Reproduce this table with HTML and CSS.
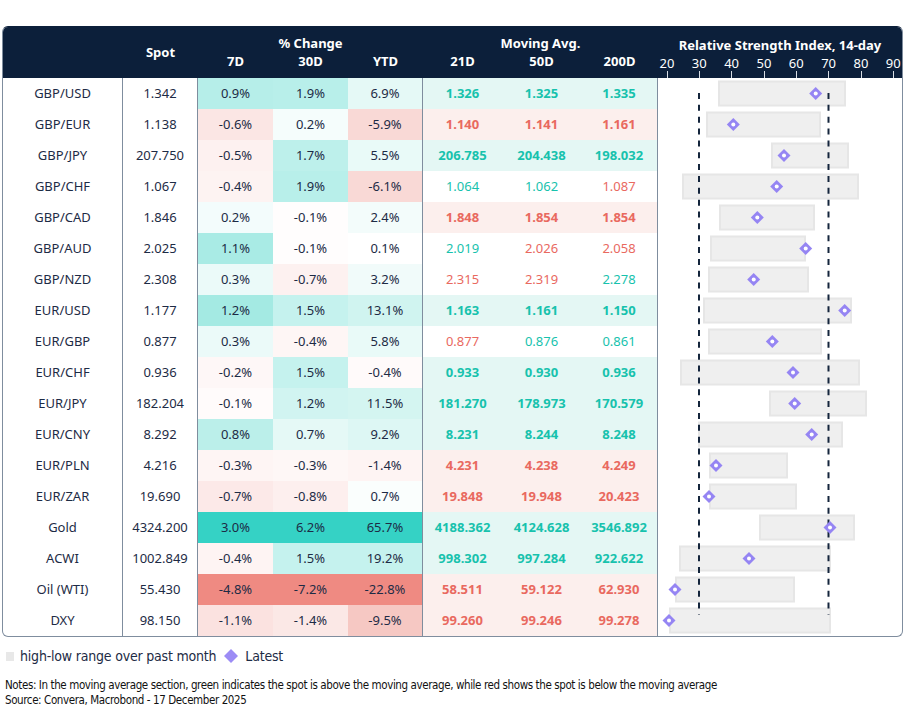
FILE: index.html
```html
<!DOCTYPE html>
<html>
<head>
<meta charset="utf-8">
<link rel="stylesheet" href="styles.css">
</head>
<body>
<div class="panel">
  <div class="head">
    <div class="h-spot">Spot</div>
    <div class="h-pc">% Change</div>
    <div class="h-ma">Moving Avg.</div>
    <div class="h-sub c3">7D</div>
    <div class="h-sub c4">30D</div>
    <div class="h-sub c5">YTD</div>
    <div class="h-sub c6">21D</div>
    <div class="h-sub c7">50D</div>
    <div class="h-sub c8">200D</div>
    <div class="h-rsi">
      <div class="rsi-title">Relative Strength Index, 14-day</div>
      <div class="axis">
        <span class="lbl" style="left:9px">20</span>
        <span class="lbl" style="left:41.3px">30</span>
        <span class="lbl" style="left:73.6px">40</span>
        <span class="lbl" style="left:106px">50</span>
        <span class="lbl" style="left:138.3px">60</span>
        <span class="lbl" style="left:170.6px">70</span>
        <span class="lbl" style="left:203px">80</span>
        <span class="lbl" style="left:235.2px">90</span>
        <i class="tick" style="left:9px"></i>
        <i class="tick" style="left:41px"></i>
        <i class="tick" style="left:73px"></i>
        <i class="tick" style="left:106px"></i>
        <i class="tick" style="left:138px"></i>
        <i class="tick" style="left:170px"></i>
        <i class="tick" style="left:203px"></i>
        <i class="tick" style="left:235px"></i>
      </div>
    </div>
  </div>
  <div class="body">
    <div class="tbl">
      <div class="row up"><div class="pair">GBP/USD</div><div class="spot">1.342</div><div class="pc" style="background:#b6eee9">0.9%</div><div class="pc" style="background:#b8efea">1.9%</div><div class="pc ytd" style="background:#e5f9f6">6.9%</div><div class="ma">1.326</div><div class="ma">1.325</div><div class="ma m200">1.335</div></div>
      <div class="row dn"><div class="pair">GBP/EUR</div><div class="spot">1.138</div><div class="pc" style="background:#fbe6e4">-0.6%</div><div class="pc" style="background:#f5fdfc">0.2%</div><div class="pc ytd" style="background:#f9d9d6">-5.9%</div><div class="ma">1.140</div><div class="ma">1.141</div><div class="ma m200">1.161</div></div>
      <div class="row up"><div class="pair">GBP/JPY</div><div class="spot">207.750</div><div class="pc" style="background:#fdf1f0">-0.5%</div><div class="pc" style="background:#bdf0eb">1.7%</div><div class="pc ytd" style="background:#e9faf8">5.5%</div><div class="ma">206.785</div><div class="ma">204.438</div><div class="ma m200">198.032</div></div>
      <div class="row"><div class="pair">GBP/CHF</div><div class="spot">1.067</div><div class="pc" style="background:#fdf3f2">-0.4%</div><div class="pc" style="background:#b8efea">1.9%</div><div class="pc ytd" style="background:#f9d9d6">-6.1%</div><div class="ma g">1.064</div><div class="ma g">1.062</div><div class="ma m200 r">1.087</div></div>
      <div class="row dn"><div class="pair">GBP/CAD</div><div class="spot">1.846</div><div class="pc" style="background:#f3fcfc">0.2%</div><div class="pc" style="background:#fffdfd">-0.1%</div><div class="pc ytd" style="background:#f3fcfb">2.4%</div><div class="ma">1.848</div><div class="ma">1.854</div><div class="ma m200">1.854</div></div>
      <div class="row"><div class="pair">GBP/AUD</div><div class="spot">2.025</div><div class="pc" style="background:#a9ebe5">1.1%</div><div class="pc" style="background:#fffdfd">-0.1%</div><div class="pc ytd" style="background:#ffffff">0.1%</div><div class="ma g">2.019</div><div class="ma r">2.026</div><div class="ma m200 r">2.058</div></div>
      <div class="row"><div class="pair">GBP/NZD</div><div class="spot">2.308</div><div class="pc" style="background:#ebfaf9">0.3%</div><div class="pc" style="background:#fdf1f0">-0.7%</div><div class="pc ytd" style="background:#f1fbfa">3.2%</div><div class="ma r">2.315</div><div class="ma r">2.319</div><div class="ma m200 g">2.278</div></div>
      <div class="row up"><div class="pair">EUR/USD</div><div class="spot">1.177</div><div class="pc" style="background:#a4eae3">1.2%</div><div class="pc" style="background:#c5f2ee">1.5%</div><div class="pc ytd" style="background:#d0f4f0">13.1%</div><div class="ma">1.163</div><div class="ma">1.161</div><div class="ma m200">1.150</div></div>
      <div class="row"><div class="pair">EUR/GBP</div><div class="spot">0.877</div><div class="pc" style="background:#ebfaf9">0.3%</div><div class="pc" style="background:#fef6f5">-0.4%</div><div class="pc ytd" style="background:#e9faf8">5.8%</div><div class="ma r">0.877</div><div class="ma g">0.876</div><div class="ma m200 g">0.861</div></div>
      <div class="row up"><div class="pair">EUR/CHF</div><div class="spot">0.936</div><div class="pc" style="background:#fef7f7">-0.2%</div><div class="pc" style="background:#c5f2ee">1.5%</div><div class="pc ytd" style="background:#fffafa">-0.4%</div><div class="ma">0.933</div><div class="ma">0.930</div><div class="ma m200">0.936</div></div>
      <div class="row up"><div class="pair">EUR/JPY</div><div class="spot">182.204</div><div class="pc" style="background:#fffbfb">-0.1%</div><div class="pc" style="background:#d1f4f1">1.2%</div><div class="pc ytd" style="background:#d4f5f1">11.5%</div><div class="ma">181.270</div><div class="ma">178.973</div><div class="ma m200">170.579</div></div>
      <div class="row up"><div class="pair">EUR/CNY</div><div class="spot">8.292</div><div class="pc" style="background:#bbefea">0.8%</div><div class="pc" style="background:#e5f9f6">0.7%</div><div class="pc ytd" style="background:#ddf7f4">9.2%</div><div class="ma">8.231</div><div class="ma">8.244</div><div class="ma m200">8.248</div></div>
      <div class="row dn"><div class="pair">EUR/PLN</div><div class="spot">4.216</div><div class="pc" style="background:#fef5f4">-0.3%</div><div class="pc" style="background:#fef7f6">-0.3%</div><div class="pc ytd" style="background:#fef4f3">-1.4%</div><div class="ma">4.231</div><div class="ma">4.238</div><div class="ma m200">4.249</div></div>
      <div class="row dn"><div class="pair">EUR/ZAR</div><div class="spot">19.690</div><div class="pc" style="background:#fce9e8">-0.7%</div><div class="pc" style="background:#fdefee">-0.8%</div><div class="pc ytd" style="background:#fafefd">0.7%</div><div class="ma">19.848</div><div class="ma">19.948</div><div class="ma m200">20.423</div></div>
      <div class="row up"><div class="pair">Gold</div><div class="spot">4324.200</div><div class="pc" style="background:#35d2c5">3.0%</div><div class="pc" style="background:#35d2c5">6.2%</div><div class="pc ytd" style="background:#35d2c5">65.7%</div><div class="ma">4188.362</div><div class="ma">4124.628</div><div class="ma m200">3546.892</div></div>
      <div class="row up"><div class="pair">ACWI</div><div class="spot">1002.849</div><div class="pc" style="background:#fef4f3">-0.4%</div><div class="pc" style="background:#c5f2ee">1.5%</div><div class="pc ytd" style="background:#c5f2ee">19.2%</div><div class="ma">998.302</div><div class="ma">997.284</div><div class="ma m200">922.622</div></div>
      <div class="row dn"><div class="pair">Oil (WTI)</div><div class="spot">55.430</div><div class="pc" style="background:#ef8a82">-4.8%</div><div class="pc" style="background:#ef8a82">-7.2%</div><div class="pc ytd" style="background:#ef8a82">-22.8%</div><div class="ma">58.511</div><div class="ma">59.122</div><div class="ma m200">62.930</div></div>
      <div class="row dn"><div class="pair">DXY</div><div class="spot">98.150</div><div class="pc" style="background:#fbe2e0">-1.1%</div><div class="pc" style="background:#fbe8e6">-1.4%</div><div class="pc ytd" style="background:#f6c8c3">-9.5%</div><div class="ma">99.260</div><div class="ma">99.246</div><div class="ma m200">99.278</div></div>
    </div>
    <svg class="rsi" width="244" height="558" viewBox="0 0 244 558">
      <g class="bars">
        <rect x="61" y="3.5" width="126" height="24"/>
        <rect x="49" y="34.5" width="113" height="24"/>
        <rect x="114" y="65.5" width="76" height="24"/>
        <rect x="25" y="96.5" width="175" height="24"/>
        <rect x="62" y="127.5" width="94" height="24"/>
        <rect x="53" y="158.5" width="94" height="24"/>
        <rect x="51" y="189.5" width="99" height="24"/>
        <rect x="46" y="220.5" width="147" height="24"/>
        <rect x="51" y="251.5" width="112" height="24"/>
        <rect x="23" y="282.5" width="178" height="24"/>
        <rect x="112" y="313.5" width="96" height="24"/>
        <rect x="41" y="344.5" width="143" height="24"/>
        <rect x="52" y="375.5" width="77" height="24"/>
        <rect x="52" y="406.5" width="86" height="24"/>
        <rect x="102" y="437.5" width="94" height="24"/>
        <rect x="22" y="468.5" width="150" height="24"/>
        <rect x="18" y="499.5" width="118" height="24"/>
        <rect x="12" y="530.5" width="160" height="24"/>
      </g>
      <g class="guides">
        <line x1="41" y1="15" x2="41" y2="537"/>
        <line x1="170.5" y1="15" x2="170.5" y2="537"/>
      </g>
      <g class="marks">
        <polygon points="157.7,9 164.2,15.5 157.7,22 151.2,15.5"/>
        <polygon points="75.3,40 81.8,46.5 75.3,53 68.8,46.5"/>
        <polygon points="126,71 132.5,77.5 126,84 119.5,77.5"/>
        <polygon points="118.7,102 125.2,108.5 118.7,115 112.2,108.5"/>
        <polygon points="99.3,133 105.8,139.5 99.3,146 92.8,139.5"/>
        <polygon points="147.7,164 154.2,170.5 147.7,177 141.2,170.5"/>
        <polygon points="95.7,195 102.2,201.5 95.7,208 89.2,201.5"/>
        <polygon points="186.7,226 193.2,232.5 186.7,239 180.2,232.5"/>
        <polygon points="114.3,257 120.8,263.5 114.3,270 107.8,263.5"/>
        <polygon points="135,288 141.5,294.5 135,301 128.5,294.5"/>
        <polygon points="136.7,319 143.2,325.5 136.7,332 130.2,325.5"/>
        <polygon points="153.7,350 160.2,356.5 153.7,363 147.2,356.5"/>
        <polygon points="58,381 64.5,387.5 58,394 51.5,387.5"/>
        <polygon points="51,412 57.5,418.5 51,425 44.5,418.5"/>
        <polygon points="172,443 178.5,449.5 172,456 165.5,449.5"/>
        <polygon points="91,474 97.5,480.5 91,487 84.5,480.5"/>
        <polygon points="17,505 23.5,511.5 17,518 10.5,511.5"/>
        <polygon points="11,536 17.5,542.5 11,549 4.5,542.5"/>
      </g>
      <g class="dots">
        <circle cx="157.7" cy="15.5" r="2"/>
        <circle cx="75.3" cy="46.5" r="2"/>
        <circle cx="126" cy="77.5" r="2"/>
        <circle cx="118.7" cy="108.5" r="2"/>
        <circle cx="99.3" cy="139.5" r="2"/>
        <circle cx="147.7" cy="170.5" r="2"/>
        <circle cx="95.7" cy="201.5" r="2"/>
        <circle cx="186.7" cy="232.5" r="2"/>
        <circle cx="114.3" cy="263.5" r="2"/>
        <circle cx="135" cy="294.5" r="2"/>
        <circle cx="136.7" cy="325.5" r="2"/>
        <circle cx="153.7" cy="356.5" r="2"/>
        <circle cx="58" cy="387.5" r="2"/>
        <circle cx="51" cy="418.5" r="2"/>
        <circle cx="172" cy="449.5" r="2"/>
        <circle cx="91" cy="480.5" r="2"/>
        <circle cx="17" cy="511.5" r="2"/>
        <circle cx="11" cy="542.5" r="2"/>
      </g>
    </svg>
  </div>
</div>
<div class="legend">
  <span class="swatch"></span><span>high-low range over past month</span>
  <svg class="lg-diamond" width="14" height="14" viewBox="0 0 14 14"><polygon points="7,0 14,7 7,14 0,7"/></svg><span>Latest</span>
</div>
<div class="notes">
  <p>Notes: In the moving average section, green indicates the spot is above the moving average, while red shows the spot is below the moving average</p>
  <p>Source: Convera, Macrobond - 17 December 2025</p>
</div>
</body>
</html>
```
FILE: styles.css
```css
* { box-sizing: border-box; }
body {
  margin: 0;
  background: #ffffff;
  color: #1d2b45;
  font-family: "Noto Sans", "Open Sans", sans-serif;
}
.panel {
  margin: 26px 0 0 2px;
  width: 901px;
  border: 1px solid #7f8d9e;
  border-top-color: #0c1f3a;
  border-radius: 6px;
  overflow: hidden;
}
.head {
  display: grid;
  grid-template-columns: 120px 75px 75px 75px 75px 79px 79px 77px 244px;
  grid-template-rows: 18px 18px 8px;
  padding-top: 7px;
  background: #0c1f3a;
  color: #ffffff;
  font-size: 13px;
  font-weight: 700;
  line-height: 18px;
  text-align: center;
}
.h-spot { grid-column: 2; grid-row: 1 / 3; align-self: center; }
.h-pc { grid-column: 3 / 6; grid-row: 1; }
.h-ma { grid-column: 6 / 9; grid-row: 1; }
.h-sub { grid-row: 2; }
.c3 { grid-column: 3; }
.c4 { grid-column: 4; }
.c5 { grid-column: 5; }
.c6 { grid-column: 6; }
.c7 { grid-column: 7; }
.c8 { grid-column: 8; }
.h-rsi { grid-column: 9; grid-row: 1 / 4; padding-top: 2px; }
.rsi-title { line-height: 18px; }
.axis { position: relative; height: 24px; font-weight: 400; }
.lbl { position: absolute; top: 0; transform: translateX(-50%); line-height: 18px; }
.tick { position: absolute; bottom: 0; width: 1px; height: 7px; background: #d8dde4; }

.body { display: flex; }
.tbl { width: 655px; }
.row {
  display: grid;
  grid-template-columns: 120px 75px 75px 75px 75px 79px 79px 77px;
  height: 31px;
  font-size: 13px;
  line-height: 31px;
  text-align: center;
}
.pair, .spot, .ytd, .m200 { border-right: 1px solid #7f8d9e; }
.ma.g { color: #17c2ad; }
.ma.r { color: #e9695f; }
.row.up .ma { background: #e4f7f4; color: #17c2ad; font-weight: 700; }
.row.dn .ma { background: #fcefed; color: #e9695f; font-weight: 700; }

.rsi { display: block; }
.bars rect { fill: #efefef; stroke: #e6e6e6; stroke-width: 2; }
.guides line { stroke: #14253c; stroke-width: 2; stroke-dasharray: 6 5.85; }
.marks polygon { fill: #9585f3; }
.dots circle { fill: #ffffff; }

.legend {
  display: flex;
  align-items: center;
  margin-top: 10px;
  padding-left: 6px;
  height: 18px;
  font-family: "Liberation Sans Narrow", "DejaVu Sans Condensed", "Liberation Sans", sans-serif;
  font-size: 14px;
  letter-spacing: -0.2px;
  color: #1d2b45;
}
.swatch { width: 8px; height: 9px; background: #e8e8e8; margin-right: 6px; }
.lg-diamond { margin: 0 7px 0 8px; }
.lg-diamond polygon { fill: #9c8cf5; }
.notes {
  margin-top: 13px;
  padding-left: 5px;
  font-family: "Liberation Sans Narrow", "DejaVu Sans Condensed", "Liberation Sans", sans-serif;
  font-size: 11.5px;
  letter-spacing: -0.4px;
  line-height: 15px;
  color: #111111;
}
.notes p { margin: 0; }
```
